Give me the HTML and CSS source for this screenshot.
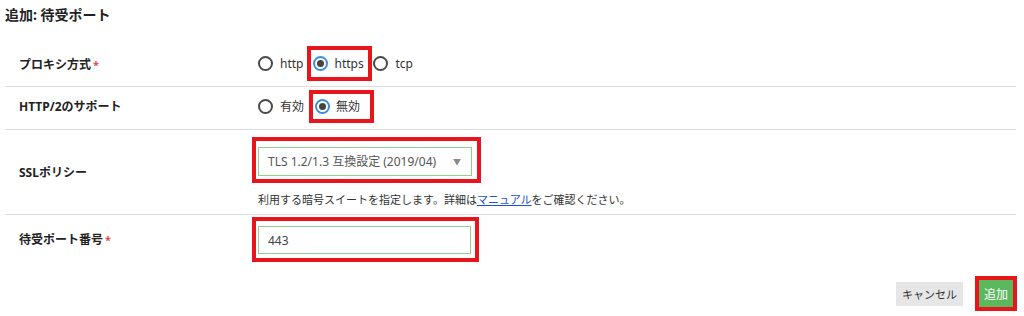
FILE: index.html
```html
<!DOCTYPE html>
<html lang="ja">
<head>
  <meta charset="UTF-8">
  <title>追加: 待受ポート</title>
  <link rel="stylesheet" href="styles.css">
</head>
<body>
  <h2 class="title">追加: 待受ポート</h2>

  <div class="form">
    <div class="row row-proxy">
      <div class="label">プロキシ方式<span class="req">*</span></div>
      <div class="field">
        <div class="opts">
          <label class="opt"><span class="radio"></span>http</label>
          <label class="opt mark mark-a"><span class="radio on"></span>https</label>
          <label class="opt"><span class="radio"></span>tcp</label>
        </div>
      </div>
    </div>

    <div class="row row-http2">
      <div class="label">HTTP/2のサポート</div>
      <div class="field">
        <div class="opts">
          <label class="opt"><span class="radio"></span>有効</label>
          <label class="opt mark mark-b"><span class="radio on"></span>無効</label>
        </div>
      </div>
    </div>

    <div class="row row-ssl">
      <div class="label">SSLポリシー</div>
      <div class="field">
        <div class="mark-select">
          <div class="select">
            <span>TLS 1.2/1.3 互換設定 (2019/04)</span>
            <span class="arrow">▼</span>
          </div>
        </div>
        <p class="help">利用する暗号スイートを指定します。詳細は<a href="#">マニュアル</a>をご確認ください。</p>
      </div>
    </div>

    <div class="row row-port">
      <div class="label">待受ポート番号<span class="req">*</span></div>
      <div class="field">
        <div class="mark-input">
          <input class="text" type="text" value="443">
        </div>
      </div>
    </div>
  </div>

  <div class="actions">
    <button class="btn btn-cancel">キャンセル</button>
    <div class="mark-btn">
      <button class="btn btn-add">追加</button>
    </div>
  </div>
</body>
</html>
```

FILE: styles.css
```css
body {
  margin: 0;
  font-family: "Noto Sans", "Noto Sans CJK JP", sans-serif;
  font-size: 12px;
  color: #333;
  background: #fff;
}
.title {
  margin: 0;
  padding: 5px 5px 15px;
  font-size: 14px;
  line-height: 20px;
  font-weight: bold;
  color: #222;
}
.form {
  margin: 0 8px 0 5px;
}
.row {
  display: flex;
  align-items: center;
  border-bottom: 1px solid #dcdcdc;
}
.row:last-child {
  border-bottom: none;
}
.row-proxy {
  height: 47px;
  padding-top: 1px;
  box-sizing: border-box;
}
.row-http2 {
  height: 43px;
  padding-bottom: 4px;
  box-sizing: border-box;
}
.row-ssl {
  height: 85px;
  padding-bottom: 1px;
  box-sizing: border-box;
}
.row-port {
  height: 48px;
}
.label {
  width: 233px;
  padding-left: 14px;
  font-weight: bold;
  color: #222;
}
.req {
  color: #e54848;
  margin-left: 2px;
  font-size: 11px;
}
.field {
  flex: 1;
}
.opts {
  display: flex;
  align-items: center;
  padding-left: 6px;
}
.opt {
  display: inline-flex;
  align-items: center;
  gap: 7px;
  margin-right: 4px;
  color: #333;
}
.radio {
  width: 15px;
  height: 15px;
  box-sizing: border-box;
  border: 2px solid #4a4a4a;
  border-radius: 50%;
  background: #fff;
  position: relative;
}
.radio.on {
  border-color: #3c8fe0;
}
.radio.on::after {
  content: "";
  position: absolute;
  left: 2px;
  top: 2px;
  width: 7px;
  height: 7px;
  border-radius: 50%;
  background: #444;
}
.mark {
  box-sizing: border-box;
  width: 65px;
  border: 4px solid #e8151d;
  padding-left: 2px;
  gap: 6px;
  margin-right: 1px;
}
.mark-a {
  height: 35px;
  margin-left: 0;
}
.mark-b {
  height: 33px;
  margin-left: 1px;
}
.mark-select {
  display: inline-block;
  margin-top: 1px;
  border: 4px solid #e8151d;
  padding: 6px 5px 3px 2px;
}
.select {
  box-sizing: border-box;
  width: 214px;
  height: 29px;
  border: 1px solid #8fd08a;
  display: flex;
  align-items: center;
  justify-content: space-between;
  padding: 0 10px 0 9px;
  color: #555;
}
.arrow {
  font-size: 8px;
  color: #888;
}
.help {
  margin: 9px 0 0 6px;
  font-size: 11px;
  line-height: 16px;
  color: #333;
}
.help a {
  color: #1a4fd6;
}
.mark-input {
  display: inline-block;
  margin-top: 1px;
  border: 4px solid #e8151d;
  padding: 5px 4px 4px 2px;
}
.text {
  display: block;
  box-sizing: border-box;
  width: 213px;
  height: 28px;
  border: 1px solid #8fd08a;
  padding: 0 9px;
  font-family: inherit;
  font-size: 12px;
  color: #444;
  outline: none;
}
.actions {
  display: flex;
  justify-content: flex-end;
  align-items: center;
  gap: 12px;
  padding: 13px 7px 0 0;
}
.btn {
  border: none;
  padding: 0;
  white-space: nowrap;
  font-family: inherit;
  font-size: 12px;
  cursor: pointer;
}
.btn-cancel {
  height: 24px;
  width: 67px;
  font-size: 11px;
  background: #e6e6e6;
  color: #333;
}
.mark-btn {
  border: 4px solid #e8151d;
  padding: 0;
}
.btn-add {
  display: block;
  width: 34px;
  height: 27px;
  background: #5cb85c;
  color: #fff;
}
```
